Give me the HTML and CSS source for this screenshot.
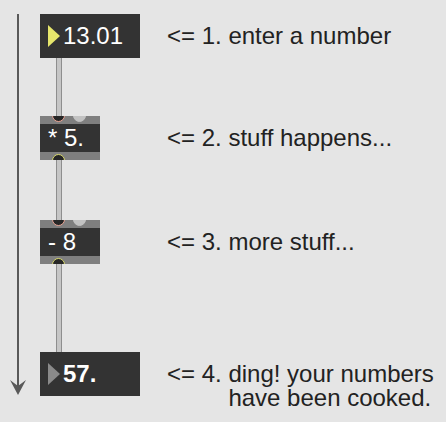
FILE: index.html
```html
<!DOCTYPE html>
<html lang="en">
<head>
    <meta charset="UTF-8">
    <meta name="viewport" content="width=device-width, initial-scale=1.0">
    <title>Number Cooker</title>
    <link rel="stylesheet" href="styles.css">
</head>
<body>
    <div class="patch">
        <svg class="flow-arrow" width="40" height="382" viewBox="0 0 40 382">
            <line x1="18" y1="0" x2="18" y2="372" stroke="#595959" stroke-width="2"/>
            <polygon points="10,366 18,372 26,366 18,381" fill="#595959"/>
        </svg>

        <div class="chain">
            <div class="step">
                <div class="numbox">
                    <span class="tri tri-live"></span>
                    <span class="val">13.01</span>
                </div>
                <p class="note">&lt;= 1. enter a number</p>
            </div>
            <div class="cable cable-1"></div>

            <div class="step">
                <div class="obj">
                    <span class="inlet inlet-hot"></span>
                    <span class="inlet inlet-cold"></span>
                    <span class="obj-text">* 5.</span>
                    <span class="outlet"></span>
                </div>
                <p class="note">&lt;= 2. stuff happens...</p>
            </div>
            <div class="cable cable-2"></div>

            <div class="step">
                <div class="obj">
                    <span class="inlet inlet-hot"></span>
                    <span class="inlet inlet-cold"></span>
                    <span class="obj-text">- 8</span>
                    <span class="outlet"></span>
                </div>
                <p class="note">&lt;= 3. more stuff...</p>
            </div>
            <div class="cable cable-3"></div>

            <div class="step step-last">
                <div class="numbox">
                    <span class="tri tri-idle"></span>
                    <span class="val val-bold">57.</span>
                </div>
                <p class="note">&lt;= 4. <span class="note-wrap">ding! your numbers<br>have been cooked.</span></p>
            </div>
        </div>
    </div>
</body>
</html>
```

FILE: styles.css
```css
body {
    margin: 0;
    background-color: #e5e5e5;
    font-family: "Liberation Sans", Arial, sans-serif;
    color: #222;
}
.patch {
    display: flex;
    padding-top: 14px;
}
.flow-arrow {
    display: block;
    flex: none;
}
.chain {
    display: flex;
    flex-direction: column;
}
.step {
    display: grid;
    grid-template-columns: 127px 1fr;
    align-items: center;
}
.step-last {
    align-items: start;
}
.step-last .note {
    margin-top: 10px;
}
.note {
    margin: 0;
    font-size: 24px;
    line-height: 24px;
    white-space: nowrap;
}
.note-wrap {
    display: inline-block;
    vertical-align: top;
}

/* number boxes */
.numbox {
    display: flex;
    align-items: center;
    width: 92px;
    height: 44px;
    padding-left: 8px;
    background-color: #333;
}
.tri {
    width: 0;
    height: 0;
    border-top: 11.5px solid transparent;
    border-bottom: 11.5px solid transparent;
    border-left: 12px solid #e6e66c;
    margin-right: 3px;
}
.tri-idle {
    border-left-color: #8a8a8a;
}
.val {
    color: #fff;
    font-size: 24px;
}
.val-bold {
    font-weight: bold;
}

/* objects */
.obj {
    position: relative;
    overflow: hidden;
    display: flex;
    align-items: center;
    width: 52px;
    height: 44px;
    padding-left: 8px;
    background: linear-gradient(#7f7f7f 0 8px, #333 8px 36px, #7f7f7f 36px 44px);
}
.obj-text {
    color: #fff;
    font-size: 24px;
}
.inlet,
.outlet {
    position: absolute;
    width: 11px;
    height: 11px;
    border-radius: 50%;
    border: 1.5px solid #e9a394;
    background-color: #262626;
    left: 12px;
}
.inlet {
    top: -7px;
}
.inlet-cold {
    left: 33px;
    border-color: #c2c2c2;
    background-color: #c2c2c2;
}
.outlet {
    bottom: -7px;
    border-color: #d9d96e;
}

/* patch cords */
.cable {
    width: 4px;
    margin-left: 16px;
    background-color: #c6c6c6;
    border-left: 1px solid #8e8e8e;
    border-right: 1px solid #8e8e8e;
}
.cable-1 {
    height: 58px;
}
.cable-2 {
    height: 60px;
}
.cable-3 {
    height: 88px;
}
```
